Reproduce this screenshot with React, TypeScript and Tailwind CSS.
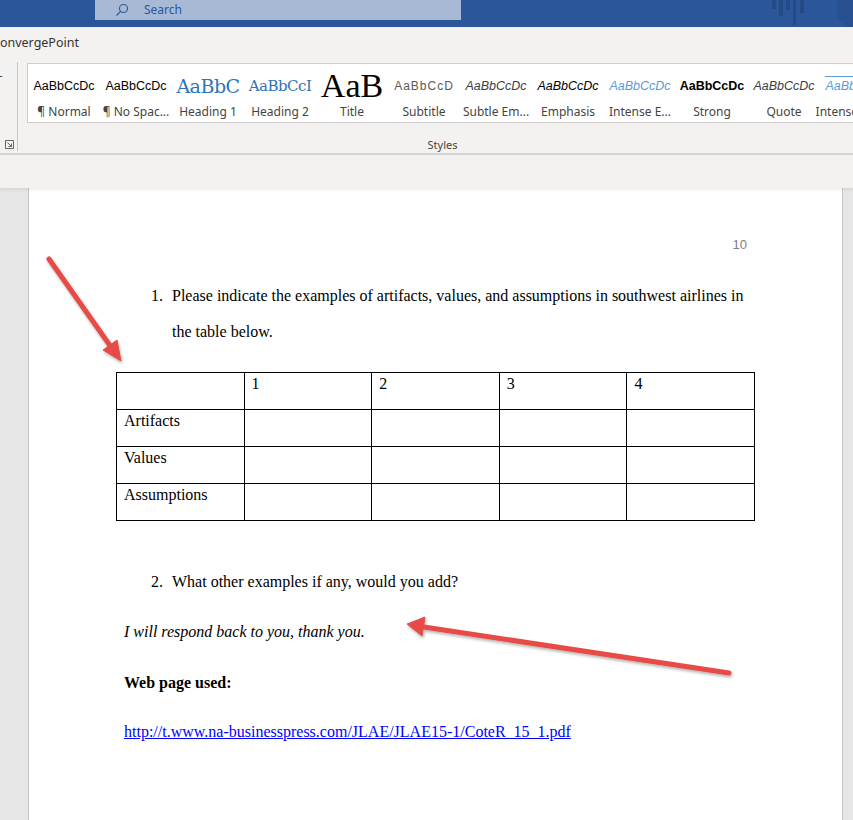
import React from 'react';

type StyleItem = {
    label: string;
    sample: string;
    sampleClass: string;
};

const styleItems: StyleItem[] = [
    { label: '¶ Normal', sample: 'AaBbCcDc', sampleClass: "font-['Liberation_Sans',sans-serif] text-[12.5px] text-black" },
    { label: '¶ No Spac...', sample: 'AaBbCcDc', sampleClass: "font-['Liberation_Sans',sans-serif] text-[12.5px] text-black" },
    { label: 'Heading 1', sample: 'AaBbC', sampleClass: "font-['DejaVu_Serif',serif] text-[19px] text-[#2e74b5] tracking-[-0.5px]" },
    { label: 'Heading 2', sample: 'AaBbCcI', sampleClass: "font-['DejaVu_Serif',serif] text-[15px] text-[#2e74b5] tracking-[-0.5px]" },
    { label: 'Title', sample: 'AaB', sampleClass: "font-['Liberation_Serif',serif] text-[34px] leading-none text-black" },
    { label: 'Subtitle', sample: 'AaBbCcD', sampleClass: "font-['Liberation_Sans',sans-serif] text-[12px] tracking-[1px] text-[#5a5a5a]" },
    { label: 'Subtle Em...', sample: 'AaBbCcDc', sampleClass: "font-['Liberation_Sans',sans-serif] italic text-[12.5px] text-[#404040]" },
    { label: 'Emphasis', sample: 'AaBbCcDc', sampleClass: "font-['Liberation_Sans',sans-serif] italic text-[12.5px] text-black" },
    { label: 'Intense E...', sample: 'AaBbCcDc', sampleClass: "font-['Liberation_Sans',sans-serif] italic text-[12.5px] text-[#5b9bd5]" },
    { label: 'Strong', sample: 'AaBbCcDc', sampleClass: "font-['Liberation_Sans',sans-serif] font-bold text-[12.5px] text-black" },
    { label: 'Quote', sample: 'AaBbCcDc', sampleClass: "font-['Liberation_Sans',sans-serif] italic text-[12.5px] text-[#404040]" },
    { label: 'Intense Quote', sample: 'AaBbCcDc', sampleClass: "font-['Liberation_Sans',sans-serif] italic text-[12.5px] text-[#5b9bd5] border-t border-[#5b9bd5]" },
];

const tableRows = ['', 'Artifacts', 'Values', 'Assumptions'];
const tableCols = ['1', '2', '3', '4'];

const TitleBar: React.FC = () => (
    <div className="relative h-[27px] bg-[#2b579a] overflow-hidden">
        <div className="absolute left-[95px] top-0 w-[366px] h-[20px] bg-[#a7b9d4] flex items-center">
            <svg width="14" height="14" viewBox="0 0 14 14" className="ml-[20px]">
                <circle cx="8.5" cy="5.5" r="4" fill="none" stroke="#2b579a" strokeWidth="1.1" />
                <line x1="5.6" y1="8.4" x2="1.5" y2="12.5" stroke="#2b579a" strokeWidth="1.2" />
            </svg>
            <span className="ml-[15px] text-[12px] text-[#2b579a] font-['Noto_Sans',sans-serif]">Search</span>
        </div>
        {/* decorative bars in the corner */}
        <svg width="853" height="27" className="absolute left-0 top-0">
            <rect x="772" y="0" width="4" height="9" fill="#244a85" />
            <rect x="779" y="0" width="4" height="16" fill="#244a85" />
            <rect x="786" y="0" width="4" height="10" fill="#244a85" />
            <rect x="793" y="0" width="3" height="25" fill="#244a85" />
            <rect x="800" y="0" width="4" height="13" fill="#244a85" />
            <polygon points="837,0 853,0 853,27 848,27 837,18" fill="#284f8f" />
        </svg>
    </div>
);

const Ribbon: React.FC = () => (
    <div className="bg-[#f3f2f1] font-['Noto_Sans',sans-serif]">
        <div className="h-[31px] flex items-center pt-[1px]">
            <span className="ml-[-8px] text-[12.5px] text-[#333]">ConvergePoint</span>
        </div>
        <div className="h-[97px] flex border-b-2 border-[#d6d4d2]">
            <div className="w-[18px] flex flex-col justify-between border-r border-[#c8c6c4] mt-[4px] mb-[2px] overflow-hidden">
                <span className="text-[13px] leading-none text-[#444] ml-[-5px] mt-[12px]">T</span>
                <svg width="9" height="9" viewBox="0 0 9 9" className="ml-[5px] mb-[2px]">
                    <path d="M0.5 0.5h8v8h-8z M0.5 0.5v8 M2.5 2.5l4 4 M6.5 3.5v3h-3" fill="none" stroke="#666" strokeWidth="1" />
                </svg>
            </div>
            <div className="flex-1 flex flex-col overflow-hidden">
                <div className="ml-[9px] mt-[5px] h-[60px] bg-white border-y border-l border-[#cfcdcb] flex overflow-hidden">
                    {styleItems.map((item) => (
                        <div key={item.label} className="w-[72px] shrink-0 flex flex-col items-center">
                            <div className="h-[40px] w-[66px] pt-[4px] flex items-center justify-center overflow-hidden whitespace-nowrap">
                                <span className={item.sampleClass}>{item.sample}</span>
                            </div>
                            <span className="text-[12px] leading-[15px] text-[#444] whitespace-nowrap">{item.label}</span>
                        </div>
                    ))}
                </div>
                <div className="flex-1 flex items-center justify-center pl-[14px]">
                    <span className="text-[11px] text-[#444] mt-[14px]">Styles</span>
                </div>
            </div>
        </div>
        <div className="h-[33px] relative z-10 shadow-[0_2px_3px_rgba(0,0,0,0.07)]" />
    </div>
);

const Page: React.FC = () => (
    <div className="w-[815px] shrink-0 bg-white border-x border-[#c6c6c6] px-[95px] pt-[48px] font-['Liberation_Serif',serif] text-[16px] text-black">
        <div className="text-right text-[13px] text-[#7f7f7f] font-['Liberation_Sans',sans-serif] leading-[18px]">10</div>
        <div className="mt-[24px] flex leading-[36px]">
            <span className="w-[48px] text-right pr-[9px]">1.</span>
            <p className="flex-1">
                Please indicate the examples of artifacts, values, and assumptions in southwest airlines in the table below.
            </p>
        </div>
        <table className="mt-[22px] ml-[-8px] w-[639px] table-fixed border-collapse">
            <tbody>
                {tableRows.map((row, r) => (
                    <tr key={r}>
                        <td className="border border-black h-[37px] align-top leading-[18px] pt-[2px] px-[7px]">{row}</td>
                        {tableCols.map((col) => (
                            <td key={col} className="border border-black h-[37px] align-top leading-[18px] pt-[2px] px-[7px]">
                                {r === 0 ? col : ''}
                            </td>
                        ))}
                    </tr>
                ))}
            </tbody>
        </table>
        <div className="mt-[43px] flex leading-[36px]">
            <span className="w-[48px] text-right pr-[9px]">2.</span>
            <p className="flex-1">What other examples if any, would you add?</p>
        </div>
        <p className="mt-[14px] italic leading-[36px]">I will respond back to you, thank you.</p>
        <p className="mt-[15px] font-bold leading-[36px]">Web page used:</p>
        <p className="mt-[13px] leading-[36px]">
            <a className="text-[#0000ff] underline">http://t.www.na-businesspress.com/JLAE/JLAE15-1/CoteR_15_1.pdf</a>
        </p>
    </div>
);

const Arrows: React.FC = () => (
    <svg width="853" height="820" className="absolute left-0 top-0 pointer-events-none">
        <defs>
            <filter id="arrowShadow" x="-20%" y="-20%" width="140%" height="140%">
                <feDropShadow dx="1" dy="2" stdDeviation="1.5" floodColor="#000" floodOpacity="0.3" />
            </filter>
        </defs>
        <g filter="url(#arrowShadow)" fill="#e64c46" stroke="#e64c46">
            <line x1="49" y1="259" x2="111" y2="347" strokeWidth="5" strokeLinecap="round" />
            <polygon points="121,361 103,350 117,340" strokeWidth="1" strokeLinejoin="round" />
            <line x1="729" y1="673" x2="424" y2="627" strokeWidth="5" strokeLinecap="round" />
            <polygon points="407,624 425,617 422,636" strokeWidth="1" strokeLinejoin="round" />
        </g>
    </svg>
);

const App: React.FC = () => {
    return (
        <div className="relative w-[853px] h-[820px] overflow-hidden bg-[#e6e6e6]">
            <TitleBar />
            <Ribbon />
            <div className="flex pl-[28px] h-[632px]">
                <Page />
            </div>
            <Arrows />
        </div>
    );
};

export default App;
